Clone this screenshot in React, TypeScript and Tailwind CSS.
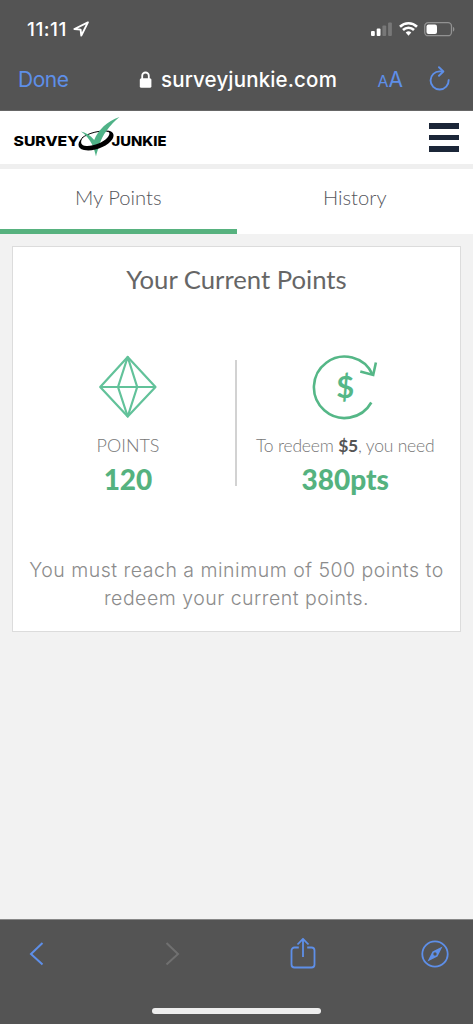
function StatusBar() {
	return (
		<div className="flex h-[58px] items-center pl-[27px] pr-[18px] text-white">
			<p className="w-[42px] text-[19px] leading-none font-medium tracking-[0.5px]">
				11:11
			</p>
			<svg
				className="ml-[4px] h-[16px] w-[16px]"
				viewBox="0 0 16 16"
				fill="none"
				stroke="currentColor"
				strokeWidth="1.9"
				strokeLinejoin="round"
			>
				<path d="M14.9 1.4 1.4 8l6.2.6.7 6z" />
			</svg>
			<svg className="ml-auto h-[16px] w-[85px]" viewBox="0 0 85 16">
				<rect x="1" y="10" width="3.8" height="5" rx="1" fill="#fff" />
				<rect x="6.7" y="7.5" width="3.8" height="7.5" rx="1" fill="#fff" />
				<rect x="12.4" y="4.5" width="3.8" height="10.5" rx="1" fill="#787878" />
				<rect x="18.1" y="1.5" width="3.8" height="13.5" rx="1" fill="#787878" />
				<g fill="none" stroke="#fff" strokeWidth="2.6">
					<path d="M30 5.7a12.2 12.2 0 0 1 17 0" />
					<path d="M33 9a8 8 0 0 1 11 0" />
				</g>
				<path d="M35.7 11.6a4.2 4.2 0 0 1 5.6 0l-2.8 3.2z" fill="#fff" />
				<rect
					x="54.7"
					y="1.7"
					width="26.8"
					height="13"
					rx="3.5"
					fill="none"
					stroke="#929292"
					strokeWidth="1.3"
				/>
				<rect x="56.5" y="3.5" width="10.5" height="9.5" rx="2" fill="#fff" />
				<path d="M83 6v4.5c1.8-.6 1.8-3.9 0-4.5" fill="#929292" />
			</svg>
		</div>
	);
}

function AddressBar() {
	return (
		<div className="flex h-[53px] items-start pt-[9px] pl-[18px] pr-[23px] text-[#5e8fe8]">
			<p className="w-[121px] text-[21px] leading-[26px] tracking-[-0.5px]">
				Done
			</p>
			<svg
				className="mt-[4px] h-[18px] w-[13px] text-white"
				viewBox="0 0 13 18"
				fill="none"
			>
				<path
					d="M3.2 9V4.8a3.3 3.3 0 0 1 6.6 0V9"
					stroke="currentColor"
					strokeWidth="1.8"
				/>
				<rect x=".8" y="7.2" width="11.6" height="9.6" rx="1.6" fill="currentColor" />
			</svg>
			<p className="ml-[9px] text-[20.5px] leading-[26px] font-medium tracking-[0.15px] text-white">
				surveyjunkie.com
			</p>
			<p className="ml-auto flex items-baseline leading-[26px]">
				<span className="text-[16px]">A</span>
				<span className="text-[21px]">A</span>
			</p>
			<svg
				className="mt-[-1px] ml-[26px] h-[25px] w-[21px]"
				viewBox="0 0 20 24"
				fill="none"
				stroke="currentColor"
				strokeWidth="1.8"
				strokeLinecap="round"
				strokeLinejoin="round"
			>
				<path d="M12.8 5.2H10.5A8.7 8.7 0 1 0 18.8 13.5" />
				<path d="M9.5 1.2l4.2 4.1-4.2 4.1" />
			</svg>
		</div>
	);
}

function Logo() {
	return (
		<svg className="h-[44px] w-[156px]" viewBox="12 114 156 44">
			<g
				fontFamily="Inter, sans-serif"
				fontSize="13.6"
				fontWeight="800"
				fill="#000"
			>
				<text x="13.5" y="145.5" textLength="65.5" lengthAdjust="spacingAndGlyphs">
					SURVEY
				</text>
				<text x="111.5" y="145.5" textLength="55" lengthAdjust="spacingAndGlyphs">
					JUNKIE
				</text>
			</g>
			<path
				d="M82 138c5-4.5 20-9 28-6"
				fill="none"
				stroke="#000"
				strokeWidth="1"
			/>
			<path
				d="M81 131.5c4 .8 9.5 3.6 13.2 8.5C98.3 130 107 121 119.5 117c-9.5 8-17.5 18-20.5 29-1 4-2.5 7-3 10.5-1.5-7-4.5-18-15-25z"
				fill="#4fb287"
			/>
			<path
				d="M83.5 136.5C77 142 76.5 148.5 84 150c9.5 2 24-3.5 28.5-11 3-5-.5-9-6.5-8.5 4 .5 4.5 3.5 1.5 7-4 5-14 8.8-21 8.5-6-.3-7-4-3-9.5z"
				fill="#000"
			/>
		</svg>
	);
}

function SiteHeader() {
	return (
		<div className="flex h-[58px] items-start justify-between border-b-[5px] border-[#efefef] bg-white pt-[3px] pr-[14px] pl-[12px]">
			<Logo />
			<div className="mt-[9px] flex w-[30px] flex-col gap-[6px]">
				<div className="h-[5.5px] bg-[#1b2638]"></div>
				<div className="h-[5.5px] bg-[#1b2638]"></div>
				<div className="h-[5.5px] bg-[#1b2638]"></div>
			</div>
		</div>
	);
}

function Tabs() {
	return (
		<div className="grid h-[65px] grid-cols-2 bg-white text-center font-['Lato',sans-serif] text-[20.2px] leading-[24px] font-light text-[#55565c]">
			<div className="border-b-[5px] border-[#57b27f] pt-[16px]">My Points</div>
			<div className="pt-[16px]">History</div>
		</div>
	);
}

function GemIcon() {
	return (
		<svg
			className="h-[64px] w-[60px]"
			viewBox="98 355 60 64"
			fill="none"
			stroke="#62c29a"
			strokeWidth="2.2"
			strokeLinejoin="round"
		>
			<path d="M127.7 357 155.5 387 127.7 416.5 100.2 387zM100.2 387h55.3" />
			<path d="M127.7 357 118 387l9.7 29.5L137.2 387z" />
		</svg>
	);
}

function RedeemIcon() {
	return (
		<svg
			className="h-[66px] w-[66px]"
			viewBox="312 355 66 66"
			fill="none"
			stroke="#55b787"
			strokeWidth="2.6"
		>
			<path d="M371.3 402.5A30.7 30.7 0 1 1 372.5 374.5" />
			<path d="M360.3 371.5l12.9 3.5 2.7-12.5" />
			<text
				x="345.3"
				y="398"
				textAnchor="middle"
				fontFamily="Lato, sans-serif"
				fontSize="31"
				fontWeight="700"
				fill="#55b787"
				stroke="none"
			>
				$
			</text>
		</svg>
	);
}

function PointsCard() {
	return (
		<div className="mx-[12px] mt-[12px] h-[386px] border-[1.5px] border-[#dcdcdc] bg-white text-center font-['Lato',sans-serif]">
			<h2 className="pt-[16px] text-[25.7px] leading-[32px] text-[#666]">
				Your Current Points
			</h2>
			<div className="mt-[60px] flex">
				<div className="flex w-[222px] flex-col items-center pl-[8px]">
					<GemIcon />
					<p className="mt-[14px] text-[18px] leading-[24px] font-light text-[#777]">
						POINTS
					</p>
					<p className="mt-[5px] text-[28px] leading-[34px] font-black text-[#55b27f]">
						120
					</p>
				</div>
				<div className="mt-[5px] h-[126px] w-[1.5px] bg-[#d2d2d2]"></div>
				<div className="flex flex-1 flex-col items-center pr-[6px]">
					<RedeemIcon />
					<p className="mt-[13px] text-[17.5px] leading-[24px] font-light tracking-[-0.2px] whitespace-nowrap text-[#777]">
						To redeem <b className="font-bold text-[#555]">$5</b>, you need
					</p>
					<p className="mt-[4px] text-[28px] leading-[34px] font-black text-[#55b27f]">
						380pts
					</p>
				</div>
			</div>
			<p className="mt-[60px] font-['Inter',sans-serif] text-[19.5px] leading-[28px] font-light tracking-[0.5px] whitespace-nowrap text-[#8c8c8c]">
				You must reach a minimum of 500 points to
				<br />
				redeem your current points.
			</p>
		</div>
	);
}

function BottomBar() {
	return (
		<div className="flex h-[105px] flex-col items-center border-t border-[#888] bg-[#545454]">
			<div className="flex h-[68px] w-full items-center pl-[29px] text-[#5e8fe8]">
				<svg
					className="h-[24px] w-[15px]"
					viewBox="0 0 15 24"
					fill="none"
					stroke="currentColor"
					strokeWidth="2"
				>
					<path d="M13.5 1 2 12l11.5 10.5" />
				</svg>
				<svg
					className="ml-[121px] h-[24px] w-[15px] text-[#707070]"
					viewBox="0 0 15 24"
					fill="none"
					stroke="currentColor"
					strokeWidth="2"
				>
					<path d="M1.5 1 13 12 1.5 22.5" />
				</svg>
				<svg
					className="mt-[-2px] ml-[110px] h-[32px] w-[26px]"
					viewBox="0 0 26 32"
					fill="none"
					stroke="currentColor"
					strokeWidth="1.8"
					strokeLinejoin="round"
				>
					<path d="M8.8 10.5H4.5a3 3 0 0 0-3 3V27.5a3 3 0 0 0 3 3h17a3 3 0 0 0 3-3V13.5a3 3 0 0 0-3-3h-4.3" />
					<path d="M13 20V1.8M7.5 7.5 13 1.8l5.5 5.7" />
				</svg>
				<svg
					className="ml-[105px] h-[28px] w-[28px]"
					viewBox="0 0 28 28"
					fill="none"
					stroke="currentColor"
					strokeWidth="1.8"
				>
					<circle cx="14" cy="14" r="12.7" />
					<path
						d="M21.5 6.5 16.5 16.5 6.5 21.5l5-10zM14 12.3a1.7 1.7 0 1 0 0 3.4 1.7 1.7 0 0 0 0-3.4"
						fill="currentColor"
						fillRule="evenodd"
						stroke="none"
					/>
				</svg>
			</div>
			<div className="mt-[19.5px] h-[6px] w-[169px] rounded-full bg-[#eee]"></div>
		</div>
	);
}

export default function App() {
	return (
		<div className="flex h-[1024px] w-[473px] flex-col overflow-hidden bg-[#f2f2f2] font-['Inter',sans-serif]">
			<div className="h-[111px] border-b border-[#666] bg-[#545454]">
				<StatusBar />
				<AddressBar />
			</div>
			<SiteHeader />
			<Tabs />
			<PointsCard />
			<div className="flex-1"></div>
			<BottomBar />
		</div>
	);
}
